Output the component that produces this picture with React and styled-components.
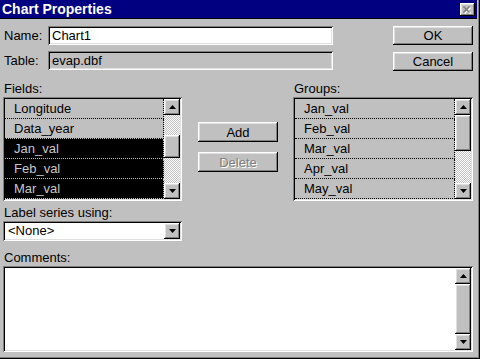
import React from 'react';
import styled, { createGlobalStyle, css } from 'styled-components';

const Global = createGlobalStyle`
  html, body { margin: 0; padding: 0; background: #c0c0c0; }
  body {
    font-family: "Liberation Sans", Arial, sans-serif;
    font-size: 13px;
    color: #000;
  }
  * { box-sizing: border-box; }
`;

const raised = css`
  box-shadow: inset -1px -1px #000, inset 1px 1px #fff, inset -2px -2px #808080, inset 2px 2px #dfdfdf;
`;
const sunken = css`
  box-shadow: inset 1px 1px #808080, inset -1px -1px #fff, inset 2px 2px #000, inset -2px -2px #dfdfdf;
`;

const Window = styled.div`
  width: 480px;
  height: 359px;
  background: #c0c0c0;
  display: flex;
  flex-direction: column;
  border-right: 1px solid #000;
  border-bottom: 1px solid #000;
  box-shadow: inset -1px -1px #808080;
  overflow: hidden;
`;

const TitleBar = styled.div`
  height: 19px;
  width: 477px;
  background: #000080;
  border-bottom: 1px solid #000;
  display: flex;
  align-items: flex-start;
  justify-content: space-between;
  padding: 0 2px 0 2px;
`;

const TitleText = styled.div`
  color: #fff;
  font-weight: bold;
  font-size: 14px;
  line-height: 18px;
`;

const CloseButton = styled.div`
  width: 15px;
  height: 13px;
  margin-top: 3px;
  background: #c0c0c0;
  ${raised};
  display: flex;
  align-items: center;
  justify-content: center;
`;

const Body = styled.div`
  padding: 7px 0 0 3px;
  display: flex;
  flex-direction: column;
`;

const TopSection = styled.div`
  display: flex;
  height: 45px;
`;

const FormCol = styled.div`
  display: flex;
  flex-direction: column;
  gap: 6px;
  width: 330px;
`;

const FormRow = styled.div`
  display: flex;
  align-items: center;
  height: 19px;
`;

const FieldLabel = styled.div`
  width: 45px;
  padding-left: 1px;
  line-height: 15px;
`;

const TextBox = styled.div`
  width: 285px;
  height: 19px;
  padding: 0 4px;
  line-height: 19px;
  background: ${p => (p.$readOnly ? '#c0c0c0' : '#fff')};
  ${sunken};
  white-space: nowrap;
`;

const ButtonCol = styled.div`
  margin-left: 60px;
  display: flex;
  flex-direction: column;
  gap: 7px;
`;

const Button = styled.div`
  width: 80px;
  height: ${p => p.$h || 19}px;
  background: #c0c0c0;
  ${raised};
  display: flex;
  align-items: center;
  justify-content: center;
  line-height: 15px;
  color: ${p => (p.$disabled ? '#808080' : '#000')};
  text-shadow: ${p => (p.$disabled ? '1px 1px #fff' : 'none')};
`;

const SectionLabel = styled.div`
  margin-top: ${p => p.$top || 0}px;
  padding-left: 1px;
  line-height: 16px;
  height: 16px;
`;

const MiddleSection = styled.div`
  display: flex;
  align-items: flex-start;
`;

const ListCol = styled.div`
  width: ${p => p.$w}px;
  margin-left: ${p => p.$ml || 0}px;
  display: flex;
  flex-direction: column;
`;

const MidButtons = styled.div`
  margin-left: 16px;
  padding-top: 51px;
  display: flex;
  flex-direction: column;
  gap: 10px;
`;

const ListFrame = styled.div`
  height: 104px;
  padding: 2px;
  background: #c0c0c0;
  ${sunken};
  display: flex;
`;

const ItemArea = styled.div`
  flex: 1;
  display: flex;
  flex-direction: column;
  overflow: hidden;
`;

const Item = styled.div`
  height: 20px;
  flex: none;
  padding-left: 9px;
  line-height: 19px;
  background: ${p => (p.$sel ? '#000' : '#c0c0c0')};
  color: ${p => (p.$sel ? '#c8c8c8' : '#000')};
  border-bottom: 1px dotted ${p => (p.$sel ? '#c0c0c0' : '#000')};
  border-right: 1px dotted ${p => (p.$sel ? '#c0c0c0' : '#000')};
  white-space: nowrap;
`;

const VScroll = styled.div`
  width: 16px;
  display: flex;
  flex-direction: column;
  flex: none;
`;

const ArrowButton = styled.div`
  width: 16px;
  height: 16px;
  flex: none;
  background: #c0c0c0;
  ${raised};
  display: flex;
  align-items: center;
  justify-content: center;
`;

const Track = styled.div`
  flex: 1;
  display: flex;
  flex-direction: column;
  background: repeating-conic-gradient(#c0c0c0 0 25%, #fff 0 50%) 0 0 / 2px 2px;
`;

const Thumb = styled.div`
  margin-top: ${p => p.$top}px;
  height: ${p => (p.$fill ? 'auto' : `${p.$h}px`)};
  flex: ${p => (p.$fill ? 1 : 'none')};
  background: #c0c0c0;
  ${raised};
`;

const Combo = styled.div`
  width: 179px;
  height: 20px;
  padding: 2px;
  background: #fff;
  ${sunken};
  display: flex;
  align-items: stretch;
`;

const ComboText = styled.div`
  flex: 1;
  padding-left: 3px;
  line-height: 16px;
`;

const TextArea = styled.div`
  width: 470px;
  height: 86px;
  padding: 2px;
  background: #fff;
  ${sunken};
  display: flex;
`;

const TextAreaBody = styled.div`
  flex: 1;
`;

const Arrow = ({ down }) => (
  <svg width="7" height="4" viewBox="0 0 7 4" style={{ display: 'block' }}>
    <polygon points={down ? '0,0 7,0 3.5,4' : '0,4 7,4 3.5,0'} fill="#000" />
  </svg>
);

const ScrollBar = ({ thumbTop = 0, thumbH = 16, fill }) => (
  <VScroll>
    <ArrowButton><Arrow /></ArrowButton>
    <Track>
      <Thumb $top={thumbTop} $h={thumbH} $fill={fill} />
    </Track>
    <ArrowButton><Arrow down /></ArrowButton>
  </VScroll>
);

const ListBox = ({ items, selected = [], thumbTop, thumbH }) => (
  <ListFrame>
    <ItemArea>
      {items.map((it, i) => (
        <Item key={it} $sel={selected.includes(i)}>{it}</Item>
      ))}
    </ItemArea>
    <ScrollBar thumbTop={thumbTop} thumbH={thumbH} />
  </ListFrame>
);

const CloseGlyph = () => (
  <svg width="9" height="8" viewBox="0 0 9 8" style={{ display: 'block' }}>
    <path d="M1.5 1.5 L7.5 7.5 M7.5 1.5 L1.5 7.5" stroke="#fff" strokeWidth="1.6" />
    <path d="M0.5 0.5 L6.5 6.5 M6.5 0.5 L0.5 6.5" stroke="#808080" strokeWidth="1.6" />
  </svg>
);

export default function App() {
  return (
    <>
      <Global />
      <Window>
        <TitleBar>
          <TitleText>Chart Properties</TitleText>
          <CloseButton><CloseGlyph /></CloseButton>
        </TitleBar>
        <Body>
          <TopSection>
            <FormCol>
              <FormRow>
                <FieldLabel>Name:</FieldLabel>
                <TextBox>Chart1</TextBox>
              </FormRow>
              <FormRow>
                <FieldLabel>Table:</FieldLabel>
                <TextBox $readOnly>evap.dbf</TextBox>
              </FormRow>
            </FormCol>
            <ButtonCol>
              <Button>OK</Button>
              <Button>Cancel</Button>
            </ButtonCol>
          </TopSection>

          <MiddleSection>
            <ListCol $w={179}>
              <SectionLabel $top={10}>Fields:</SectionLabel>
              <ListBox
                items={['Longitude', 'Data_year', 'Jan_val', 'Feb_val', 'Mar_val']}
                selected={[2, 3, 4]}
                thumbTop={20}
                thumbH={23}
              />
            </ListCol>
            <MidButtons>
              <Button $h={20}>Add</Button>
              <Button $h={20} $disabled>Delete</Button>
            </MidButtons>
            <ListCol $w={180} $ml={15}>
              <SectionLabel $top={10}>Groups:</SectionLabel>
              <ListBox
                items={['Jan_val', 'Feb_val', 'Mar_val', 'Apr_val', 'May_val']}
                thumbTop={0}
                thumbH={36}
              />
            </ListCol>
          </MiddleSection>

          <SectionLabel $top={4}>Label series using:</SectionLabel>
          <Combo>
            <ComboText>&lt;None&gt;</ComboText>
            <ArrowButton><Arrow down /></ArrowButton>
          </Combo>

          <SectionLabel $top={9}>Comments:</SectionLabel>
          <TextArea>
            <TextAreaBody />
            <ScrollBar fill thumbTop={0} />
          </TextArea>
        </Body>
      </Window>
    </>
  );
}
